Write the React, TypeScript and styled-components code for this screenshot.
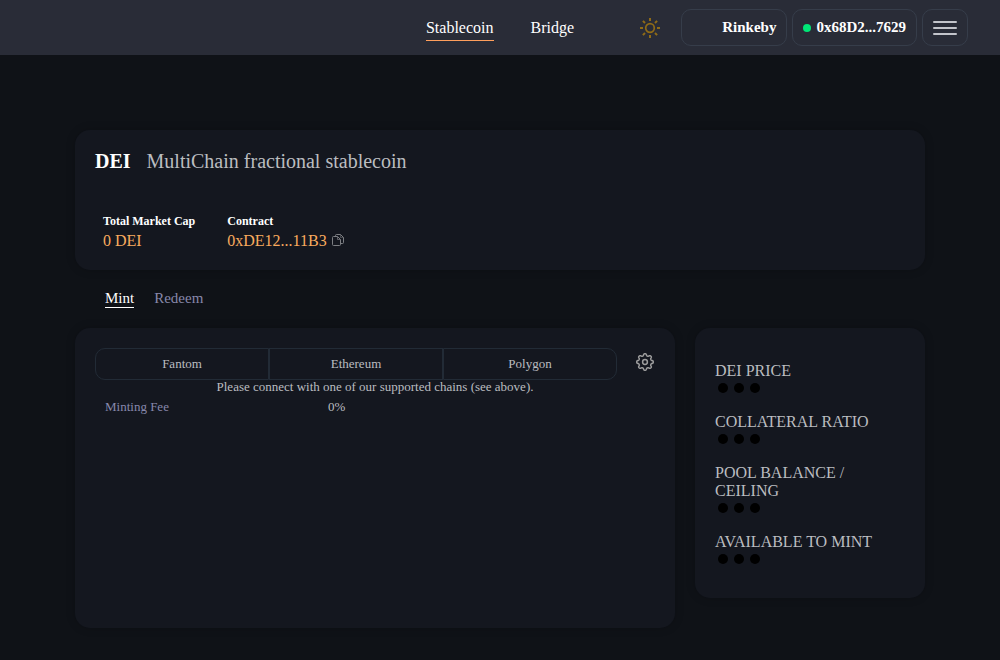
import React from "react";
import styled, { createGlobalStyle } from "styled-components";

const GlobalStyle = createGlobalStyle`
  * { box-sizing: border-box; }
  body {
    margin: 0;
    min-height: 100vh;
    background: #0f1217;
    color: #ffffff;
    font-family: "Liberation Serif", "Times New Roman", serif;
    font-size: 16px;
    line-height: 18px;
  }
  button { font-family: inherit; color: inherit; background: none; border: 0; padding: 0; cursor: pointer; }
  a { color: inherit; text-decoration: none; }
  h1, h2, p, dl, dt, dd { margin: 0; font-weight: normal; }
`;

const Header = styled.header`
  display: grid;
  grid-template-columns: 1fr auto 1fr;
  align-items: center;
  height: 55px;
  padding: 0 32px;
  background: #292c37;
`;

const NavLinks = styled.nav`
  grid-column: 2;
  display: flex;
  gap: 37px;
`;

const NavLink = styled.a<{ $active?: boolean }>`
  padding: 5px 0 3px;
  border-bottom: 1px solid ${(p) => (p.$active ? "#ff9f5c" : "transparent")};
`;

const Actions = styled.div`
  display: flex;
  justify-content: flex-end;
  align-items: center;
  gap: 5px;
`;

const ThemeButton = styled.button`
  display: flex;
  margin-right: 16px;
  color: #8f6b17;
`;

const PillButton = styled.button<{ $width?: number }>`
  display: flex;
  align-items: center;
  justify-content: flex-end;
  gap: 5px;
  height: 37px;
  min-width: ${(p) => p.$width || 0}px;
  padding: 0 10px;
  border: 1px solid #363d4a;
  border-radius: 10px;
  font-size: 15px;
  font-weight: bold;
  white-space: nowrap;
`;

const StatusDot = styled.span`
  width: 8px;
  height: 8px;
  border-radius: 50%;
  background: #00e676;
`;

const MenuLines = styled.span`
  display: flex;
  flex-direction: column;
  gap: 4px;
  width: 24px;

  i {
    height: 2px;
    border-radius: 1px;
    background: #c3c5cb;
  }
`;

const Main = styled.main`
  padding: 75px 75px 32px;
`;

const Card = styled.section`
  background: #14171f;
  border-radius: 15px;
  box-shadow: 0 0 10px rgba(0, 0, 0, 0.2);
`;

const HeroCard = styled(Card)`
  min-height: 140px;
  padding: 20px;
`;

const Heading = styled.div`
  display: flex;
  gap: 16px;
  font-size: 20px;
  line-height: 23px;

  h1 { font-size: 20px; font-weight: bold; }
  p { color: #bbbdc0; }
`;

const Stats = styled.dl`
  display: flex;
  gap: 32px;
  margin-top: 41px;
  padding: 0 8px;

  dt { font-size: 12px; line-height: 14px; font-weight: bold; }
  dd { display: flex; align-items: center; gap: 5px; margin-top: 4px; color: #f9ab5e; }
`;

const CopyButton = styled.button`
  display: flex;
  color: #7d7f83;
`;

const Tabs = styled.div`
  display: flex;
  gap: 20px;
  padding: 19px 30px 20px;
`;

const Tab = styled.button<{ $active?: boolean }>`
  font-size: 15px;
  line-height: 18px;
  border-bottom: 1px solid ${(p) => (p.$active ? "#ffffff" : "transparent")};
  color: ${(p) => (p.$active ? "#ffffff" : "#8788ab")};
`;

const Columns = styled.div`
  display: flex;
  align-items: flex-start;
  gap: 20px;
`;

const MintCard = styled(Card)`
  flex: 1;
  min-height: 300px;
  padding: 20px;
  font-size: 13px;
  line-height: 14px;
  color: #bbbdc0;
`;

const ChainRow = styled.div`
  display: flex;
  align-items: flex-start;
  gap: 18px;
`;

const Chains = styled.div`
  display: flex;
  flex: 1;
`;

const Chain = styled.button`
  flex: 1;
  height: 32px;
  border: 1px solid #222b36;
  font-size: 13px;

  &:first-child { border-radius: 10px 0 0 10px; }
  &:last-child { border-radius: 0 10px 10px 0; }
`;

const SettingsButton = styled.button`
  display: flex;
  padding: 5px 1px 0;
  color: #9c9c9c;
`;

const Notice = styled.p`
  text-align: center;
`;

const FeeRow = styled.dl`
  display: grid;
  grid-template-columns: 223px 1fr;
  margin-top: 6px;
  padding: 0 10px;

  dt { color: #8788ab; }
`;

const InfoCard = styled(Card)`
  flex: 0 0 230px;
  padding: 34px 20px 31px;
`;

const InfoList = styled.dl`
  display: flex;
  flex-direction: column;
  gap: 17px;
  color: #bbbdc0;
`;

const Loader = styled.dd`
  display: flex;
  align-items: center;
  gap: 6px;
  height: 16px;
  padding-left: 3px;

  i {
    width: 10px;
    height: 10px;
    border-radius: 50%;
    background: #000000;
  }
`;

const SunIcon = () => (
  <svg width="20" height="20" viewBox="0 0 20 20" fill="none" stroke="currentColor">
    <circle cx="10" cy="10" r="4.3" strokeWidth="1.7" />
    <path
      strokeWidth="2"
      d="M10 0v3M10 17v3M0 10h3M17 10h3M2.9 2.9l2.1 2.1M15 15l2.1 2.1M2.9 17.1L5 15M15 5l2.1-2.1"
    />
  </svg>
);

// Eight blunt teeth: the radius swings around the rim eight times per turn,
// with tanh flattening the tips and the valleys.
const gearRim = Array.from({ length: 192 }, (_, i) => {
  const angle = (i / 192) * Math.PI * 2;
  const radius = 7.3 + Math.tanh(1.8 * Math.cos(8 * angle));
  return `${(9 + radius * Math.cos(angle)).toFixed(2)},${(9 + radius * Math.sin(angle)).toFixed(2)}`;
}).join(" ");

const GearIcon = () => (
  <svg width="18" height="18" viewBox="0 0 18 18" fill="none" stroke="currentColor" strokeWidth="1.5">
    <polygon points={gearRim} strokeLinejoin="round" />
    <circle cx="9" cy="9" r="2.4" />
  </svg>
);

const CopyIcon = () => (
  <svg width="12" height="14" viewBox="0 0 12 14" fill="none" stroke="currentColor" strokeLinejoin="round">
    <path d="M1.5 2.5H5.5L8.5 5.5V10.5Q8.5 11.5 7.5 11.5H1.5Q.5 11.5 .5 10.5V3.5Q.5 2.5 1.5 2.5Z" />
    <path d="M5.5 2.5V5.5H8.5" strokeOpacity="0.7" />
    <path d="M3.5 2.5V1.5Q3.5 .5 4.5 .5H8.5L11.5 3.5V8.5Q11.5 9.5 10.5 9.5H8.5" />
    <path d="M8.5 .5V3.5H11.5" strokeOpacity="0.5" />
  </svg>
);

const chains = ["Fantom", "Ethereum", "Polygon"];
const metrics = ["DEI PRICE", "COLLATERAL RATIO", "POOL BALANCE / CEILING", "AVAILABLE TO MINT"];

export default function App() {
  return (
    <>
      <GlobalStyle />
      <Header>
        <NavLinks>
          <NavLink href="#stablecoin" $active>Stablecoin</NavLink>
          <NavLink href="#bridge">Bridge</NavLink>
        </NavLinks>
        <Actions>
          <ThemeButton aria-label="Toggle theme"><SunIcon /></ThemeButton>
          <PillButton $width={106}>Rinkeby</PillButton>
          <PillButton><StatusDot />0x68D2...7629</PillButton>
          <PillButton aria-label="Menu"><MenuLines><i /><i /><i /></MenuLines></PillButton>
        </Actions>
      </Header>
      <Main>
        <HeroCard>
          <Heading>
            <h1>DEI</h1>
            <p>MultiChain fractional stablecoin</p>
          </Heading>
          <Stats>
            <div>
              <dt>Total Market Cap</dt>
              <dd>0 DEI</dd>
            </div>
            <div>
              <dt>Contract</dt>
              <dd>
                0xDE12...11B3
                <CopyButton aria-label="Copy address"><CopyIcon /></CopyButton>
              </dd>
            </div>
          </Stats>
        </HeroCard>
        <Tabs>
          <Tab $active>Mint</Tab>
          <Tab>Redeem</Tab>
        </Tabs>
        <Columns>
          <MintCard>
            <ChainRow>
              <Chains>
                {chains.map((name) => <Chain key={name}>{name}</Chain>)}
              </Chains>
              <SettingsButton aria-label="Settings"><GearIcon /></SettingsButton>
            </ChainRow>
            <Notice>Please connect with one of our supported chains (see above).</Notice>
            <FeeRow>
              <dt>Minting Fee</dt>
              <dd>0%</dd>
            </FeeRow>
          </MintCard>
          <InfoCard>
            <InfoList>
              {metrics.map((label) => (
                <div key={label}>
                  <dt>{label}</dt>
                  <Loader aria-label="Loading"><i /><i /><i /></Loader>
                </div>
              ))}
            </InfoList>
          </InfoCard>
        </Columns>
      </Main>
    </>
  );
}
